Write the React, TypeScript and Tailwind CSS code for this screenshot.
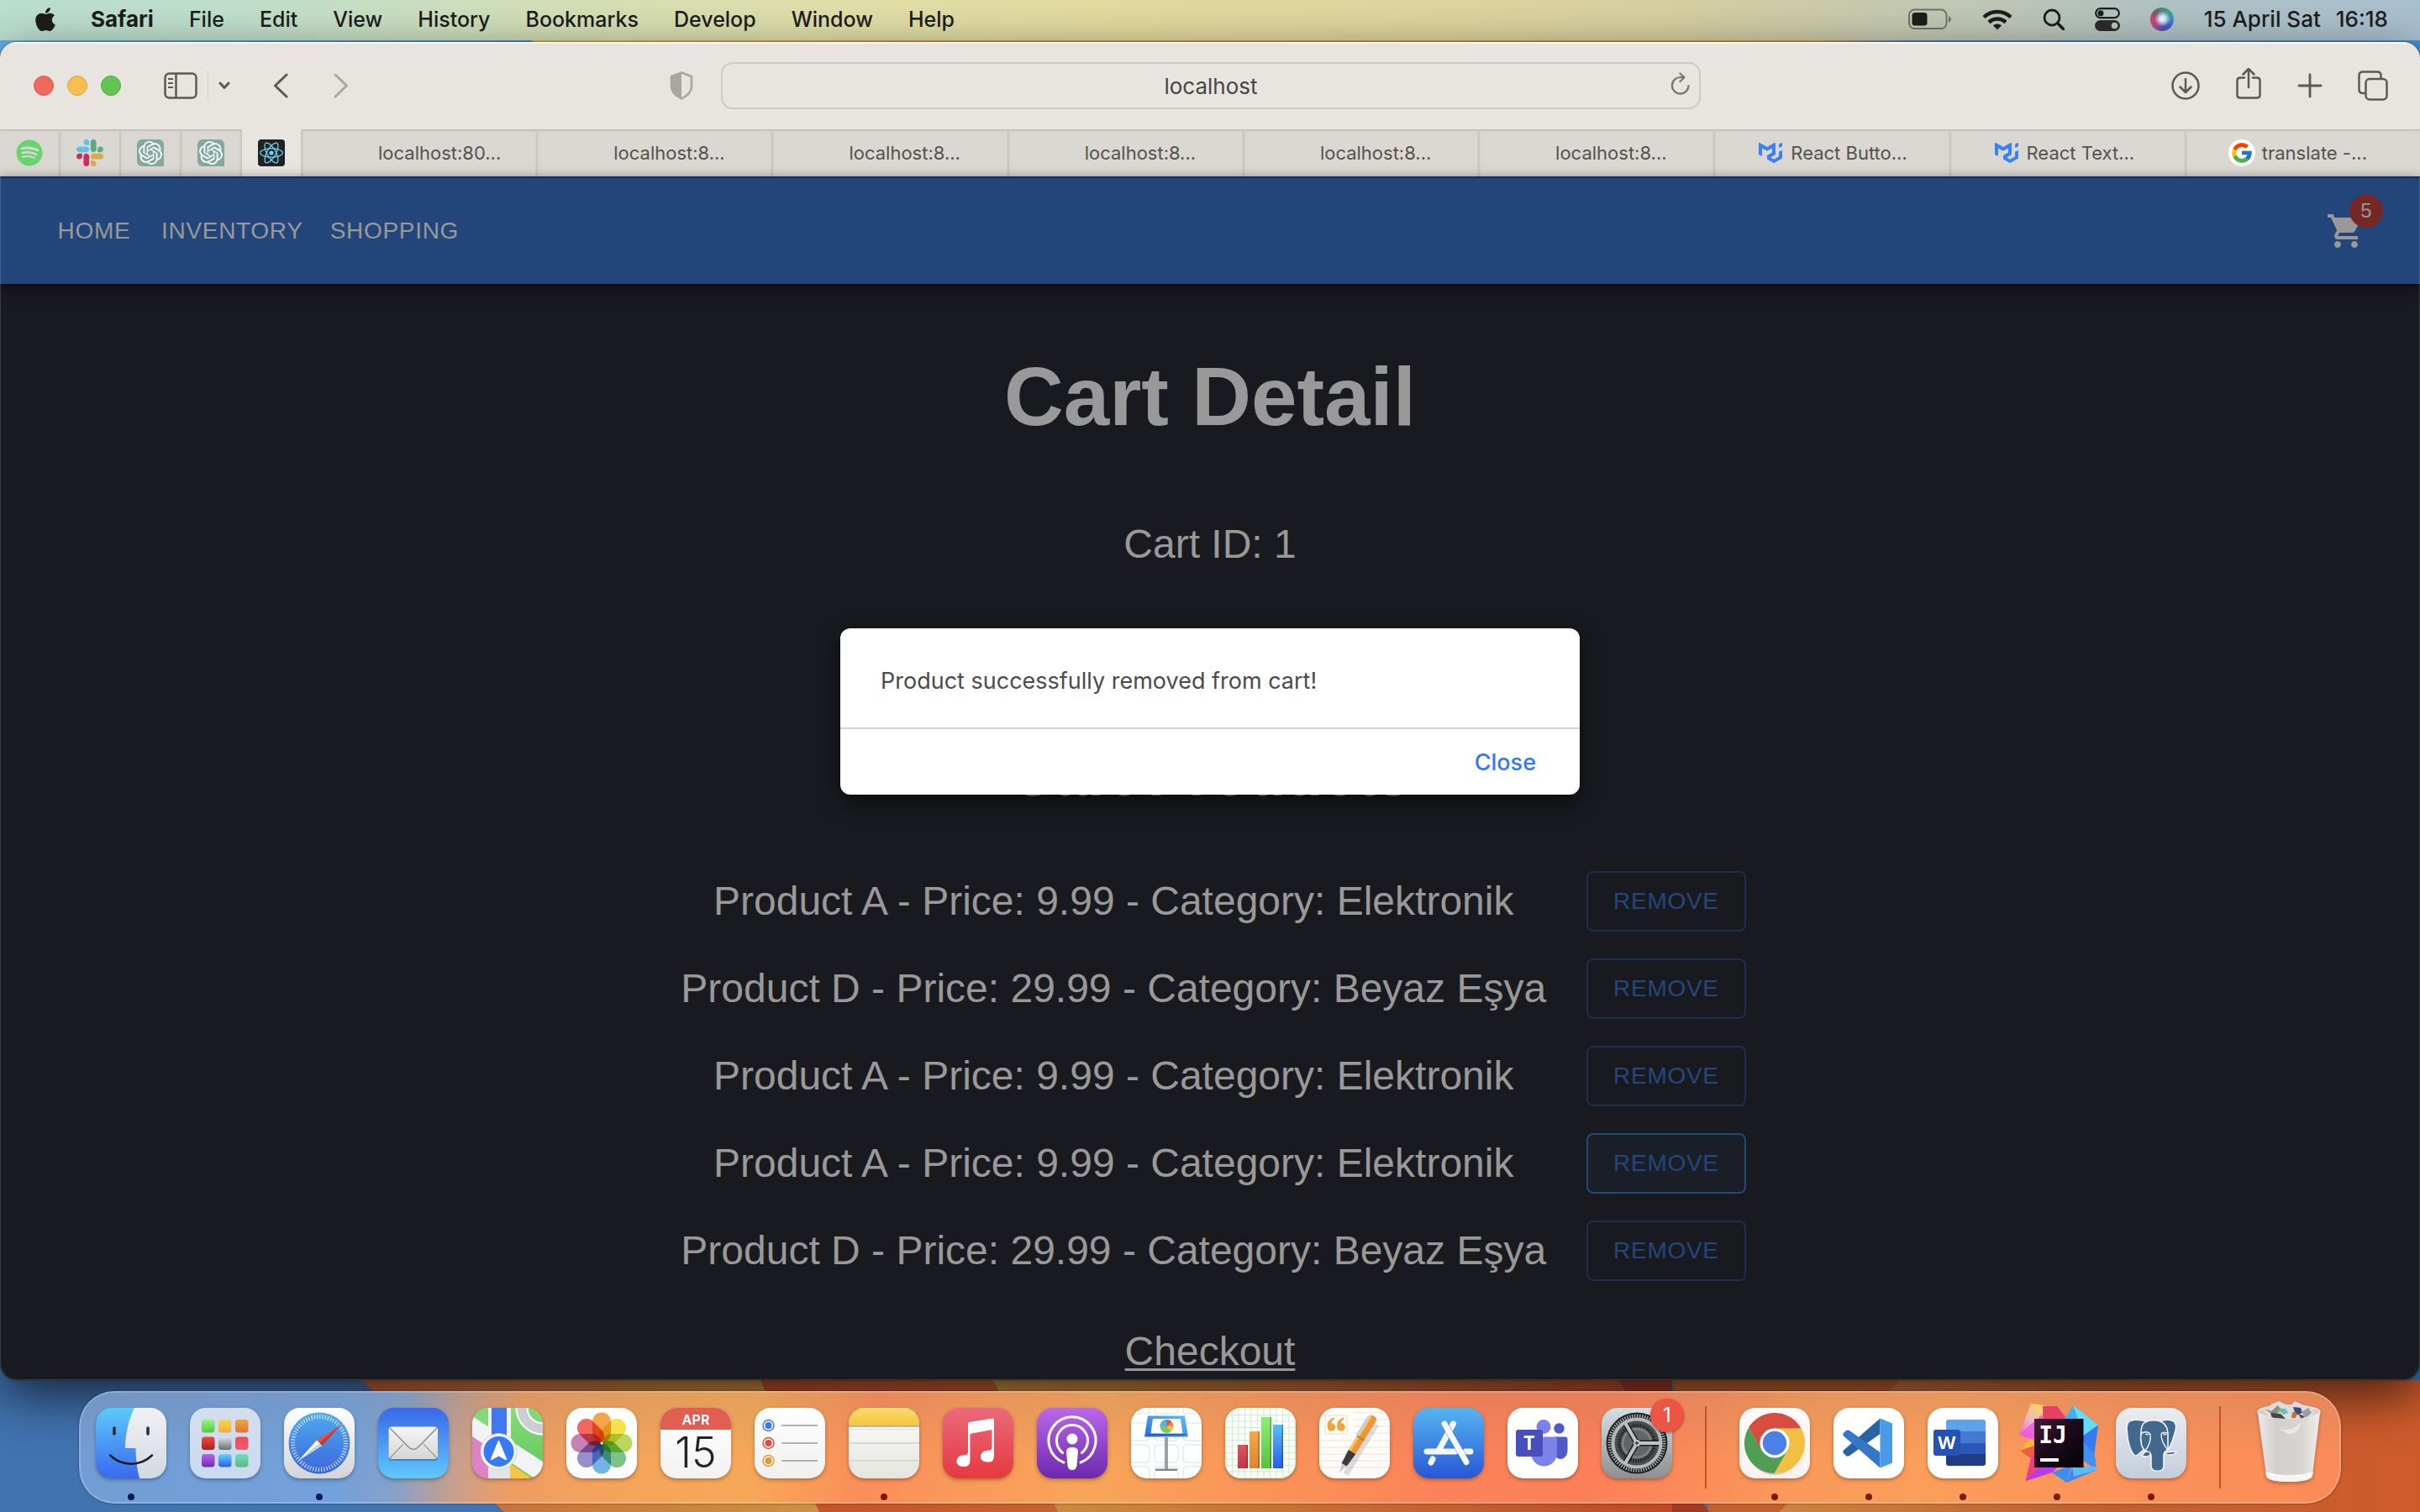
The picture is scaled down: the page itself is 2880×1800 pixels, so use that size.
import type { ReactNode } from "react";
import { FaApple, FaSpotify } from "react-icons/fa";
import { FcGoogle } from "react-icons/fc";
import { SiMui, SiOpenai, SiReact } from "react-icons/si";

/* ---------- helpers ---------- */

function Gradient({ id, from, to }: { id: string; from: string; to: string }) {
  return (
    <linearGradient id={id} x1="0" y1="0" x2="0" y2="1">
      <stop offset="0" stopColor={from} />
      <stop offset="1" stopColor={to} />
    </linearGradient>
  );
}

function Tile({ id, from, to, children }: { id: string; from: string; to: string; children?: ReactNode }) {
  return (
    <svg viewBox="0 0 84 84" className="size-[84px] overflow-visible drop-shadow-[0_2px_2px_rgba(0,0,0,0.3)]" aria-hidden="true">
      <defs>
        <Gradient id={id} from={from} to={to} />
        <clipPath id={`${id}-clip`}>
          <rect width="84" height="84" rx="19" />
        </clipPath>
      </defs>
      <g clipPath={`url(#${id}-clip)`}>
        <rect width="84" height="84" fill={`url(#${id})`} />
        {children}
      </g>
    </svg>
  );
}

/* ---------- dock icons ---------- */

function FinderIcon() {
  return (
    <Tile id="finder" from="#5ccafb" to="#3a68ee">
      <defs>
        <Gradient id="finder-face" from="#f1f1f3" to="#d3d9e2" />
      </defs>
      <path d="M46 0C40 12 35 30 35 48h12.5C47.5 60 49 73 52 84h32V0Z" fill="url(#finder-face)" />
      <path d="M22 24v7M62 24v7" stroke="#2b2b2e" strokeWidth="3.5" strokeLinecap="round" />
      <path d="M17 56.500C31 70 53 70 67 56.500" fill="none" stroke="#1d1d20" strokeWidth="2.5" strokeLinecap="round" />
    </Tile>
  );
}

const launchColors = [
  ["#95f57a", "#56c840"],
  ["#f8d651", "#efad3c"],
  ["#efa63f", "#dc7534"],
  ["#ee4b40", "#ab1f17"],
  ["#d5e2ea", "#6f6f71"],
  ["#ea4d52", "#ec5c74"],
  ["#b961ea", "#6e2fb4"],
  ["#5ed4fb", "#2f5ae8"],
  ["#75dcc8", "#58b97c"],
];

function LaunchpadIcon() {
  return (
    <Tile id="launchpad" from="#d3dfef" to="#cbdaf0">
      {launchColors.map(([from, to], i) => (
        <g key={i}>
          <defs>
            <Gradient id={`launch-${i}`} from={from} to={to} />
          </defs>
          <rect x={14 + (i % 3) * 20} y={14 + Math.floor(i / 3) * 20.5} width="15.5" height="15.5" rx="3.5" fill={`url(#launch-${i})`} />
        </g>
      ))}
    </Tile>
  );
}

function SafariIcon() {
  return (
    <Tile id="safari" from="#ffffff" to="#d4d4d6">
      <defs>
        <Gradient id="safari-dial" from="#50aaf0" to="#3a66dd" />
      </defs>
      <circle cx="42" cy="42" r="36.5" fill="url(#safari-dial)" />
      <circle cx="42" cy="42" r="31.5" fill="none" stroke="#fff" strokeOpacity=".8" strokeWidth="5" strokeDasharray="1.1 2.2" />
      <path d="M68 20 39 38.5 45 45Z" fill="#e8523f" />
      <path d="M68 20 42 42 45 45Z" fill="#bd3a2e" />
      <path d="M17 63 39 38.5 45 45Z" fill="#fff" />
      <path d="M17 63 42 42 45 45Z" fill="#c9cfd9" />
    </Tile>
  );
}

function MailIcon() {
  return (
    <Tile id="mail" from="#3a68ea" to="#60c8fa">
      <defs>
        <Gradient id="mail-env" from="#f6f6f6" to="#d6d6d6" />
      </defs>
      <rect x="12.5" y="24" width="58.5" height="39" rx="4" fill="#000" fillOpacity=".25" />
      <rect x="12.5" y="22.5" width="58.5" height="38.5" rx="4" fill="url(#mail-env)" />
      <path d="m14 60 16-17M70 60 54 43" stroke="#999" strokeWidth="1.2" />
      <path d="m14 24 22 22.500q6 6 12 0L70 24" fill="none" stroke="#8e8e8e" strokeWidth="1.5" />
    </Tile>
  );
}

function MapsIcon() {
  return (
    <Tile id="maps" from="#86dc78" to="#5fc65b">
      <path d="M0 30 30 50 19 84H0Z" fill="#de82c6" />
      <path d="M45 66 80 90H40Z" fill="#f3c73f" />
      <path d="M0 10 84 64V84H74L0 34Z" fill="#f2f3f6" />
      <path d="M0 10 18 21V0H0Z" fill="#84da76" />
      <path d="M19 58h26v26H19Z" fill="#e3e5ea" />
      <path d="M19 0h27v50H19Z" fill="#f2f3f6" />
      <path d="M23 0h18v40H23Z" fill="#3f78f0" />
      <circle cx="84" cy="0" r="25" fill="none" stroke="#fff" strokeWidth="15" />
      <circle cx="84" cy="0" r="25" fill="none" stroke="#cdcdd6" strokeWidth="11" />
      <circle cx="31.5" cy="52" r="21.5" fill="#f4f5f8" stroke="#c5c8d0" strokeWidth=".8" />
      <circle cx="31.5" cy="52" r="18" fill="#377af5" />
      <path d="M31.500 39.500 40.500 61.500l-9-5-9 5Z" fill="#fff" stroke="#fff" strokeWidth="1.5" strokeLinejoin="round" />
    </Tile>
  );
}

const petals = ["#f39c33", "#f4e03a", "#b4d54a", "#6bc07a", "#64aee4", "#8d84c9", "#c274ae", "#f1584c"];

function PhotosIcon() {
  return (
    <Tile id="photos" from="#ffffff" to="#fbfbfd">
      {petals.map((color, i) => (
        <rect key={color} x="31" y="5.5" width="22" height="36" rx="11" fill={color} fillOpacity=".9" transform={`rotate(${i * 45} 42 42)`} className="mix-blend-multiply" />
      ))}
      <circle cx="42" cy="42" r="1.5" fill="#fff" />
    </Tile>
  );
}

function CalendarIcon() {
  return (
    <Tile id="calendar" from="#ffffff" to="#f2f2f2">
      <path d="M0 0h84v26H0Z" fill="#e05f52" />
      <text x="42" y="20" textAnchor="middle" fill="#fff" fontFamily="Inter, sans-serif" fontWeight="700" fontSize="16">APR</text>
      <text x="42" y="71" textAnchor="middle" fill="#222" fontFamily="Inter, sans-serif" fontWeight="300" fontSize="50">15</text>
    </Tile>
  );
}

function RemindersIcon() {
  return (
    <Tile id="reminders" from="#ffffff" to="#f0f0ef">
      {["#3478f6", "#e34a3c", "#e8962e"].map((color, i) => (
        <g key={color}>
          <circle cx="16.5" cy={21 + i * 21} r="6.5" fill="none" stroke={color} strokeWidth="1.4" />
          <circle cx="16.5" cy={21 + i * 21} r="4" fill={color} />
          <path d={`M32 ${21 + i * 21}h43`} stroke="#b1b1b6" strokeWidth="1.8" />
        </g>
      ))}
    </Tile>
  );
}

function NotesIcon() {
  return (
    <Tile id="notes" from="#fcfcfa" to="#e6e6e0">
      <defs>
        <Gradient id="notes-top" from="#f9dc6d" to="#f4c53c" />
      </defs>
      <path d="M0 0h84v21.500H0Z" fill="url(#notes-top)" />
      <path d="M0 22h84" stroke="#a7a49a" strokeWidth="1.5" />
      <path d="M2 25.500h80" stroke="#bdbdb8" strokeWidth="1.2" strokeDasharray="1.2 1.8" />
      <path d="M0 42h84M0 63h84" stroke="#cfcfcc" strokeWidth="1.5" />
    </Tile>
  );
}

function MusicIcon() {
  return (
    <Tile id="music" from="#ea6a7c" to="#e6393f">
      <path d="M30 19q0-1.500 1.500-2L59.500 12.500q1.500-.2 1.500 1.500V56c0 9-4 8.500-8 8.500-11 0-10-12.500-1-13.500 5-.6 6.500-1 6.500-4V26L32.500 31v30.500c0 8-4 8.500-8 8.500-11 0-10-12.500-1-13.500 5-.6 6.500-1 6.500-4Z" fill="#fff" />
    </Tile>
  );
}

function PodcastsIcon() {
  return (
    <Tile id="podcasts" from="#bb68ea" to="#6c28ac">
      <g fill="none" stroke="#fff" strokeWidth="3" strokeLinecap="round">
        <path d="M32 65A28 28 0 1 1 52 65" />
        <path d="M30.500 53.500A18.500 18.500 0 1 1 53.500 53.500" />
      </g>
      <circle cx="42" cy="37" r="6.5" fill="#fff" />
      <path d="M35 52q0-5 7-5t7 5l-1.500 17q-.8 5-5.500 5t-5.500-5Z" fill="#fff" />
    </Tile>
  );
}

function KeynoteIcon() {
  return (
    <Tile id="keynote" from="#ffffff" to="#ffffff">
      <g fill="none" stroke="#cfe2f3" strokeWidth="1">
        {[-14, 18, 44, 70].map((y) => [-12, 28, 62].map((x) => <rect key={`${x}-${y}`} x={x} y={y} width={x === 28 ? 28 : 34} height="21" rx="4" />))}
      </g>
      <defs>
        <linearGradient id="keynote-screen" x1="0" y1="1" x2="1" y2="0">
          <stop offset="0" stopColor="#2c6be0" />
          <stop offset="1" stopColor="#5cc2fa" />
        </linearGradient>
      </defs>
      <path d="M40 35h4v38h-4Z" fill="#9aa1ab" />
      <path d="M29 72.500h26v2.500H29Z" fill="#85898f" />
      <path d="M20 9.500h44L68 34.500H16Z" fill="url(#keynote-screen)" />
      <path d="M20 32h45" stroke="#173f96" strokeWidth="1.2" />
      <path d="M26 13h33l2.500 17.500H23.500Z" fill="#fff" />
      <circle cx="42.5" cy="22" r="8" fill="#7cc85c" />
      <path d="M42.500 22V14a8 8 0 0 0-8 8Z" fill="#4bb4ea" />
      <path d="M42.500 22V14a8 8 0 0 1 6 2.700Z" fill="#dd4b5b" />
      <path d="m42.500 22 6-5.300a8 8 0 0 1 2 5.300Z" fill="#ea8a38" />
      <path d="M42.500 22h8a8 8 0 0 1-3 6.200Z" fill="#f1c543" />
    </Tile>
  );
}

function NumbersIcon() {
  const lines = Array.from({ length: 12 }, (_, i) => 1 + i * 7.5);
  return (
    <Tile id="numbers" from="#ffffff" to="#fafafa">
      <g stroke="#c9f0c3" strokeWidth="1">
        {lines.map((v) => <path key={v} d={`M${v} 0V84M0 ${v}H84`} />)}
      </g>
      {[
        [15, 44, "#dd5560", "#c5333f"],
        [29, 28, "#f2ab48", "#dd842f"],
        [43, 11, "#8df071", "#56c43c"],
        [57, 20, "#58c0fa", "#2a5ce8"],
      ].map(([x, y, from, to]) => (
        <g key={x}>
          <defs>
            <Gradient id={`bar-${x}`} from={String(from)} to={String(to)} />
          </defs>
          <rect x={x} y={y} width="12" height={72 - Number(y)} fill={`url(#bar-${x})`} />
          <rect x={Number(x) + 10.5} y={y} width="1.5" height={72 - Number(y)} fill="#000" fillOpacity=".3" />
        </g>
      ))}
    </Tile>
  );
}

function PagesIcon() {
  return (
    <Tile id="pages" from="#ffffff" to="#fafafa">
      <g stroke="#fbe0bd" strokeWidth="1.2">
        {[39, 47, 55, 63, 71].map((y) => <path key={y} d={`M0 ${y}H84`} />)}
        {[6, 14, 22, 30].map((y) => <path key={y} d={`M41 ${y}H84`} />)}
        <rect x="7" y="9" width="26" height="22" fill="none" />
      </g>
      <g fill="#efa53c">
        <circle cx="14.5" cy="23" r="4.8" />
        <circle cx="26" cy="23" r="4.8" />
        <path d="M9.700 23C9 17 12 13 18 11.500V13.500C15 15 14 17 14.500 19ZM21.200 23C20.500 17 23.500 13 29.500 11.500V13.500C26.500 15 25.500 17 26 19Z" />
      </g>
      <g transform="translate(24 77) rotate(31.5)">
        <path d="M4-2h7v-70H4Z" fill="#000" fillOpacity=".12" />
        <path d="M0 0-3.500-12h7Z" fill="#c3ccd6" />
        <path d="M-3.500-11h7L5-29H-5Z" fill="#3a3a3c" />
        <path d="M-5-29H5V-77q-5-4-10 0Z" fill="#e9973a" />
        <path d="M-5-29h3V-78l-3 1Z" fill="#f9c66c" />
        <path d="M-5-48H5" stroke="#b86f22" strokeWidth="1.5" />
        <path d="M-5.500-50v-24" stroke="#b9d4ea" strokeWidth="2.5" strokeLinecap="round" />
      </g>
    </Tile>
  );
}

function AppStoreIcon() {
  return (
    <Tile id="appstore" from="#56b5f0" to="#2857d6">
      <g stroke="#f4f7fb" strokeWidth="7" strokeLinecap="round">
        <path d="M47.500 19 30 51" />
        <path d="M16 52h34" />
        <path d="M23 61l-2 4" />
        <path d="M62 52h6" />
        <path d="M37 19 63 64.500" stroke="#2f6fd0" strokeOpacity=".35" strokeWidth="9" />
        <path d="M37 19 63 64.500" />
      </g>
    </Tile>
  );
}

function TeamsIcon() {
  return (
    <Tile id="teams" from="#ffffff" to="#ffffff">
      <circle cx="61.5" cy="24.5" r="6.2" fill="#5059c9" />
      <path d="M56 34.500h12.500q3 0 3 3V50c0 7-4 11-8.500 11S56 57 56 50Z" fill="#5059c9" />
      <circle cx="43" cy="22.5" r="8.5" fill="#7b83eb" />
      <path d="M28 34.500h27.500q3.500 0 3.500 3.500v15c0 10-7 16.500-15.500 16.500S28 63 28 53Z" fill="#7b83eb" />
      <rect x="10" y="26" width="32" height="32" rx="3" fill="#484ebc" />
      <text x="26" y="50" textAnchor="middle" fill="#fff" fontFamily="Open Sans, sans-serif" fontWeight="700" fontSize="23">T</text>
    </Tile>
  );
}

function SettingsIcon() {
  return (
    <Tile id="settings" from="#d3dfe6" to="#8e8f90">
      <circle cx="42" cy="42" r="36.5" fill="#1f2021" />
      <circle cx="42" cy="42" r="32.5" fill="none" stroke="#a9adb0" strokeWidth="4" strokeDasharray="1.4 1.6" />
      <circle cx="42" cy="42" r="28.5" fill="#4c4d4e" stroke="#b4b8ba" strokeWidth="4" />
      <circle cx="42" cy="42" r="21" fill="none" stroke="#1f2021" strokeWidth="4" strokeDasharray="1.5 1.5" />
      <circle cx="42" cy="42" r="17" fill="#636465" stroke="#7f8081" strokeWidth="3" />
      <g stroke="#1f2021" strokeWidth="7">
        <path d="M42 42h26M42 42 29 19.500M42 42 29 64.500" />
      </g>
      <g stroke="#bfc3c5" strokeWidth="4">
        <path d="M42 42h28M42 42 28 17.800M42 42 28 66.200" />
      </g>
      <circle cx="42" cy="42" r="4" fill="#bfc3c5" />
      <circle cx="42" cy="42" r="1.8" fill="#333" />
    </Tile>
  );
}

function ChromeIcon() {
  const wedge = "M42 24.500H73.500A36 36 0 0 0 11.100 23.500L26.850 50.750 42 42Z";
  return (
    <Tile id="chrome" from="#fffafa" to="#fdf1ee">
      <ellipse cx="42" cy="46" rx="33" ry="34" fill="#000" fillOpacity=".14" />
      <path d={wedge} fill="#f1bf42" transform="rotate(120 42 42)" />
      <path d={wedge} fill="#4f9e53" transform="rotate(240 42 42)" />
      <path d={wedge} fill="#d74e40" />
      <circle cx="42" cy="42" r="17.5" fill="#fff" />
      <circle cx="42" cy="42" r="14.2" fill="#4a80e8" />
    </Tile>
  );
}

function VsCodeIcon() {
  return (
    <Tile id="vscode" from="#ffffff" to="#ffffff">
      <path d="M55.500 12.500V31L19 57q-2 1.200-4 0L12 54q-1.500-2 0-3.500Z" fill="#2763a5" />
      <path d="M55.500 71.500V53L19 27q-2-1.200-4 0L12 30q-1.500 2 0 3.500Z" fill="#3377c6" />
      <path d="M55.500 12.500 70 18.500V65.500L55.500 71.500Z" fill="#4a9aea" />
    </Tile>
  );
}

function WordIcon() {
  return (
    <Tile id="word" from="#ffffff" to="#ffffff">
      <defs>
        <clipPath id="word-page">
          <rect x="22" y="14" width="47" height="55" rx="3" />
        </clipPath>
      </defs>
      <g clipPath="url(#word-page)">
        <path d="M22 14h47v14H22Z" fill="#5ea3e8" />
        <path d="M22 28h47v14H22Z" fill="#417bd0" />
        <path d="M22 42h47v13H22Z" fill="#2b57bb" />
        <path d="M22 55h47v14H22Z" fill="#1f3c87" />
      </g>
      <rect x="7" y="26" width="32" height="31" rx="3" fill="#2552b4" />
      <text x="23" y="49" textAnchor="middle" fill="#fff" fontFamily="Open Sans, sans-serif" fontWeight="700" fontSize="22">W</text>
    </Tile>
  );
}

function IntelliJIcon() {
  return (
    <svg viewBox="0 0 84 84" className="size-[84px] overflow-visible" aria-hidden="true">
      <defs>
        <linearGradient id="ij-fan" x1="0" y1="1" x2=".6" y2="0">
          <stop offset="0" stopColor="#e84be8" />
          <stop offset=".6" stopColor="#f0b6c8" />
          <stop offset="1" stopColor="#f6d36a" />
        </linearGradient>
        <linearGradient id="ij-box" x1="0" y1="0" x2="1" y2="1">
          <stop offset="0" stopColor="#4a1a3a" />
          <stop offset=".45" stopColor="#1c0a1c" />
          <stop offset="1" stopColor="#050304" />
        </linearGradient>
      </defs>
      <path d="M-3 32 11-5 27-3 24 14 15 40Z" fill="url(#ij-fan)" />
      <path d="M-3 32 24 8 30 30 15 38Z" fill="#e957dd" fillOpacity=".8" />
      <path d="M25-2h17L53 12 50 30H26Z" fill="#e73f66" />
      <path d="M61.500-3 91 20.500 73 40 50 14Z" fill="#43aef0" />
      <path d="M61.500-3 91 20.500 73 34Z" fill="#64dcfb" />
      <path d="M91 20.500 86.500 54 89 74 70 60 72 34Z" fill="#3478f2" />
      <path d="M73 40 86.500 54 89 74 70 60Z" fill="#3f92f4" />
      <path d="M-2 51 9 37 20 40 18 50Z" fill="#f4b23e" />
      <path d="M-2 51 18 44 20 60 11 60Z" fill="#ef5a44" />
      <path d="M11 59 20 50 36 77 4.500 87Z" fill="#ea3f84" />
      <path d="M22 70 46 68 36 77 4.500 87Z" fill="#b83bf0" />
      <path d="M36 77 60 68 53.500 89Z" fill="#3a8df5" />
      <path d="M53.500 89 62 66 89 74Z" fill="#3f86f3" />
      <path d="M60 70 89 70 89 74 62 82Z" fill="#58bdf6" />
      <rect x="15" y="13" width="58.5" height="58" fill="url(#ij-box)" />
      <text x="37" y="42" textAnchor="middle" fill="#fff" fontFamily="DejaVu Sans Mono, monospace" fontWeight="700" fontSize="28">IJ</text>
      <path d="M22 62h22" stroke="#fff" strokeWidth="4" />
    </svg>
  );
}

function PostgresIcon() {
  return (
    <Tile id="postgres" from="#eaedf1" to="#c3cddb">
      <g fill="#42688f" stroke="#f4f6f9" strokeWidth="1.6" strokeLinejoin="round" strokeLinecap="round">
        <path d="M52 16c5-2 14-3 18 1 2 3 2 6 1 10-2 8-4 15-8 22l-6-2Z" />
        <path d="M36 16c-7-2-17-3-21 1-3 4-2 9-1 18 1 8 3 14 6 19 2 3 4 4 6 2l7-6Z" />
        <path d="M30 30c0-6 1-11 5-13 5-3 15-3 20 0 5 3 7 9 7 16v16c-1 2-5 3-5 7v14c-1 7-14 7-15 0V57c0-4-4-4-7-6-5-3-6-13-5-21Z" />
        <path d="M30 31c3-3 9-3 11 0 1 8-1 14-6 20M62 30c-4-1-8-1-8 2 0 7 3 11 7 17" fill="none" strokeWidth="1.3" />
        <path d="M31 57c2-1 3-5 5-5s5 0 5 2-2 4-5 4-4 0-5-1ZM58 53c5 0 9-1 14-1-1 3-5 4-8 4s-5-1-6-3Z" strokeWidth="1.3" />
      </g>
      <path d="M36 31.500h3M57 31.500h2.500" stroke="#fff" strokeWidth="1.6" strokeLinecap="round" />
    </Tile>
  );
}

function TrashIcon() {
  return (
    <svg viewBox="0 0 84 84" className="size-[84px] overflow-visible drop-shadow-[0_2px_2px_rgba(0,0,0,0.3)]" aria-hidden="true">
      <defs>
        <linearGradient id="trash-body" x1="0" y1="0" x2="1" y2="0">
          <stop offset="0" stopColor="#ededed" />
          <stop offset=".3" stopColor="#d3d3d1" />
          <stop offset=".7" stopColor="#d8d8d6" />
          <stop offset="1" stopColor="#f2f2f2" />
        </linearGradient>
      </defs>
      <ellipse cx="42" cy="5" rx="37" ry="8" fill="#d8cfcb" stroke="#eee" strokeWidth="1.5" />
      <path d="M11 3 22-5 30-8 38-4 42 0 49-8 60-3 68-1 72 6 66 13H20Z" fill="#dcdcda" />
      <path d="m13 1 8 3 8-7 4 6-9 6Z" fill="#8a8c8d" />
      <path d="m20 6 12 1 6 6-16-1Z" fill="#4a4743" />
      <path d="m30 1 8 0 3 5-6 2Z" fill="#58c4dc" />
      <path d="m26 4 7-4 1 5Z" fill="#7fbf4a" />
      <path d="m47-1 9 1 2 6-8 3Z" fill="#3e4b77" />
      <path d="m46 5 6 1-2 6-5 0Z" fill="#c96a35" />
      <path d="m57 5 8-5 4 6-7 6Z" fill="#9a9c9e" />
      <path d="m53 7 8 3-4 4Z" fill="#5a5148" />
      <path d="M5 6q37 15 74 0L70 80q-1 8-28 8T15 80Z" fill="url(#trash-body)" fillOpacity=".97" />
      <path d="M14 76q28 8 57 0l-1 5q-2 7-28 7t-27-7Z" fill="#fafafa" fillOpacity=".9" />
      <path d="M31 25q14 4 26-8-3 14-16 14Z" fill="#f2f2f2" fillOpacity=".7" />
    </svg>
  );
}

/* ---------- menu bar ---------- */

const menus = ["File", "Edit", "View", "History", "Bookmarks", "Develop", "Window", "Help"];

function MenuBar() {
  return (
    <header className="flex h-12 shrink-0 items-center justify-between bg-[linear-gradient(90deg,#bbded1_0%,#c0dfcc_10%,#d2dfb8_22%,#dfdfab_33%,#e3da9f_46%,#dfd49e_60%,#d6cfa0_69%,#c2c8b3_80%,#b0c2c4_90%,#a8bfd0_100%)] px-[38px] pb-0.5 text-[25px] leading-8 text-[#1c1e1b]">
      <nav aria-label="Menu bar" className="flex items-center gap-[42px]">
        <button type="button" aria-label="Apple menu" className="-mr-1"><FaApple className="size-8" /></button>
        <button type="button" className="text-[26px] font-bold">Safari</button>
        {menus.map((menu) => (
          <button type="button" key={menu} className="font-medium">{menu}</button>
        ))}
      </nav>
      <div className="flex items-center gap-9">
        <svg viewBox="0 0 52 26" className="h-[26px] w-[52px]" aria-label="Battery">
          <rect x="1" y="1.5" width="44.5" height="22.5" rx="6.5" fill="none" stroke="#1c1e1b" strokeOpacity=".5" strokeWidth="2" />
          <rect x="4.5" y="5" width="18" height="15.5" rx="3.5" fill="#1c1e1b" />
          <path d="M48 9q3 1.500 3 4t-3 4Z" fill="#1c1e1b" fillOpacity=".5" />
        </svg>
        <svg viewBox="0 0 36 26" className="h-[26px] w-9" aria-label="Wi-Fi" fill="none" stroke="#1c1e1b" strokeWidth="4.5">
          <path d="M2 10.500a23 23 0 0 1 32 0" />
          <path d="M8 16.500a14.500 14.500 0 0 1 20 0" />
          <path d="m18 25.500-5-5.200a7.500 7.500 0 0 1 10 0Z" fill="#1c1e1b" stroke="none" />
        </svg>
        <svg viewBox="0 0 26 26" className="size-[26px]" aria-label="Search" fill="none" stroke="#1c1e1b" strokeWidth="2.8" strokeLinecap="round">
          <circle cx="11" cy="11" r="9" />
          <path d="m17.500 17.500 7 7" strokeWidth="3.5" />
        </svg>
        <svg viewBox="0 0 30 28" className="h-7 w-[30px]" aria-label="Control Centre">
          <rect x="1.2" y="1.2" width="27.6" height="11" rx="5.5" fill="none" stroke="#1c1e1b" strokeWidth="2.2" />
          <circle cx="7" cy="6.7" r="3.5" fill="#1c1e1b" />
          <rect y="15" width="30" height="13" rx="6.5" fill="#2b2d2a" />
          <circle cx="23.5" cy="21.5" r="3.8" fill="#bfc6b6" />
        </svg>
        <span role="img" aria-label="Siri" className="size-7 rounded-full bg-[radial-gradient(circle_at_52%_48%,#fff_0%,#cfe3f7_18%,transparent_45%),conic-gradient(#4c8f7d,#3f9f93,#3f8fd0,#3860c8,#5a4fb0,#b04a90,#d84468,#7a5a6a,#4c8f7d)]" />
        <time className="flex gap-[18px] text-[26px] font-medium">
          <span>15 April Sat</span>
          <span>16:18</span>
        </time>
      </div>
    </header>
  );
}

/* ---------- Safari toolbar and tabs ---------- */

function Toolbar() {
  return (
    <div className="flex h-[104px] shrink-0 items-center bg-[#e8e5e0] text-[#5c5953] shadow-[inset_0_2px_0_#f8f6f3]">
      <div className="flex flex-1 items-center pl-10">
        <div className="flex gap-4">
          <button type="button" aria-label="Close window" className="size-6 rounded-full border border-[#d8594c] bg-[#ed6a5e]" />
          <button type="button" aria-label="Minimise window" className="size-6 rounded-full border border-[#dba63d] bg-[#f5bf4f]" />
          <button type="button" aria-label="Zoom window" className="size-6 rounded-full border border-[#51a73e] bg-[#61c554]" />
        </div>
        <button type="button" aria-label="Show sidebar" className="ml-[51px]">
          <svg viewBox="0 0 40 32" className="h-8 w-10" fill="none" stroke="currentColor" strokeWidth="2.5">
            <rect x="1.5" y="1.5" width="37" height="29" rx="5" />
            <path d="M14.500 1.500v29" />
            <path d="M5 8h6M5 13h6M5 18h6" strokeWidth="2" />
          </svg>
        </button>
        <span className="ml-3 h-9 w-px bg-[#d3d0cb]" />
        <button type="button" aria-label="Tab groups" className="ml-3">
          <svg viewBox="0 0 14 10" className="h-2.5 w-3.5" fill="none" stroke="currentColor" strokeWidth="3" strokeLinecap="round" strokeLinejoin="round">
            <path d="m2 2 5 5.500L12 2" />
          </svg>
        </button>
        <button type="button" aria-label="Back" className="ml-[51px]">
          <svg viewBox="0 0 18 30" className="h-[30px] w-[18px]" fill="none" stroke="currentColor" strokeWidth="3" strokeLinecap="round" strokeLinejoin="round">
            <path d="M16 2 2.500 15 16 28" />
          </svg>
        </button>
        <button type="button" aria-label="Forward" className="ml-[54px] text-[#aaa7a1]">
          <svg viewBox="0 0 18 30" className="h-[30px] w-[18px]" fill="none" stroke="currentColor" strokeWidth="3" strokeLinecap="round" strokeLinejoin="round">
            <path d="M2 2 15.500 15 2 28" />
          </svg>
        </button>
        <button type="button" aria-label="Privacy report" className="mr-[33px] ml-auto text-[#a9a6a0]">
          <svg viewBox="0 0 28 34" className="h-[34px] w-7">
            <path d="M14 1.500 26 6v12c0 7-5 11-12 14.500C7 29 2 25 2 18V6Z" fill="none" stroke="currentColor" strokeWidth="2.5" strokeLinejoin="round" />
            <path d="M14 1.500V32.500C7 29 2 25 2 18V6Z" fill="currentColor" />
          </svg>
        </button>
      </div>
      <div className="relative w-[40.5%]">
        <input aria-label="Address" defaultValue="localhost" className="h-14 w-full rounded-[14px] border-2 border-[#cdcac6] bg-[#e8e5e0] text-center text-[26px] text-[#464542]" />
        <button type="button" aria-label="Reload" className="absolute top-3 right-3 text-[#77746f]">
          <svg viewBox="0 0 24 28" className="h-7 w-6" fill="none" stroke="currentColor" strokeWidth="2.2" strokeLinecap="round" strokeLinejoin="round">
            <path d="M21.500 16A9.800 9.800 0 1 1 12 6h4" />
            <path d="m11.500 1.500 5 4.500-5 5" />
          </svg>
        </button>
      </div>
      <div className="flex flex-1 items-center justify-end gap-[42px] pr-[38px]">
        <button type="button" aria-label="Downloads">
          <svg viewBox="0 0 34 34" className="size-[34px]" fill="none" stroke="currentColor" strokeWidth="2.5" strokeLinecap="round" strokeLinejoin="round">
            <circle cx="17" cy="17" r="15.5" />
            <path d="M17 9v16M10.500 18.500 17 25l6.500-6.500" />
          </svg>
        </button>
        <button type="button" aria-label="Share">
          <svg viewBox="0 0 32 38" className="mb-1.5 h-[38px] w-8" fill="none" stroke="currentColor" strokeWidth="2.5" strokeLinecap="round" strokeLinejoin="round">
            <path d="M11 12.500H6q-3.500 0-3.500 3.500v17q0 3.500 3.500 3.500h20q3.500 0 3.500-3.500V16q0-3.500-3.500-3.500h-5M16 24V2M9.500 8.500 16 2l6.500 6.500" />
          </svg>
        </button>
        <button type="button" aria-label="New tab">
          <svg viewBox="0 0 30 30" className="size-[30px]" stroke="currentColor" strokeWidth="2.8" strokeLinecap="round">
            <path d="M15 2v26M2 15h26" />
          </svg>
        </button>
        <button type="button" aria-label="Tab overview">
          <svg viewBox="0 0 36 36" className="size-9" fill="none" stroke="currentColor" strokeWidth="2.5" strokeLinejoin="round">
            <rect x="9.5" y="10" width="25" height="24.5" rx="4.5" />
            <path d="M9.500 27H6q-4.500 0-4.500-4.500V6Q1.500 1.500 6 1.500h17q4.500 0 4.500 4.500v4" />
          </svg>
        </button>
      </div>
    </div>
  );
}

function SlackMark() {
  return (
    <svg viewBox="0 0 122.8 122.8" className="size-8" aria-hidden="true">
      <path fill="#c8305b" d="M25.800 77.600c0 7.100-5.800 12.900-12.900 12.900S0 84.700 0 77.600s5.800-12.900 12.900-12.900h12.900v12.900zM32.300 77.600c0-7.100 5.800-12.900 12.900-12.900s12.900 5.800 12.900 12.900v32.300c0 7.100-5.800 12.900-12.900 12.900s-12.900-5.800-12.900-12.900V77.600z" />
      <path fill="#66bfe0" d="M45.200 25.800c-7.100 0-12.900-5.800-12.900-12.900S38.100 0 45.200 0s12.900 5.800 12.900 12.900v12.900H45.200zM45.200 32.300c7.100 0 12.900 5.800 12.900 12.900s-5.800 12.900-12.900 12.900H12.900C5.800 58.100 0 52.300 0 45.200s5.800-12.900 12.900-12.900h32.300z" />
      <path fill="#57ab7c" d="M97 45.200c0-7.100 5.800-12.900 12.900-12.900s12.900 5.800 12.900 12.900-5.800 12.900-12.900 12.900H97V45.200zM90.500 45.200c0 7.100-5.800 12.900-12.900 12.900s-12.900-5.800-12.900-12.900V12.900C64.700 5.800 70.500 0 77.600 0s12.900 5.800 12.900 12.900v32.300z" />
      <path fill="#dcaa49" d="M77.600 97c7.100 0 12.900 5.800 12.900 12.900s-5.800 12.900-12.900 12.900-12.900-5.800-12.900-12.900V97h12.900zM77.600 90.500c-7.100 0-12.900-5.800-12.900-12.900s5.800-12.900 12.900-12.900h32.300c7.100 0 12.900 5.800 12.900 12.900s-5.800 12.900-12.900 12.900H77.600z" />
    </svg>
  );
}

function GptMark() {
  return (
    <span className="flex size-8 items-center justify-center rounded-l-[6px] rounded-tr-[6px] bg-[#81a99d] text-white">
      <SiOpenai className="size-7" />
    </span>
  );
}

const pinned: { name: string; icon: ReactNode; active?: boolean }[] = [
  { name: "Spotify", icon: <FaSpotify className="size-8 text-[#67d46e]" /> },
  { name: "Slack", icon: <SlackMark /> },
  { name: "ChatGPT", icon: <GptMark /> },
  { name: "ChatGPT 2", icon: <GptMark /> },
  {
    name: "React App",
    active: true,
    icon: (
      <span className="flex size-8 items-center justify-center rounded-[4px] bg-[#222] text-[#6fd3f3]">
        <SiReact className="size-7" />
      </span>
    ),
  },
];

const muiMark = <SiMui className="size-7 text-[#3a80f6]" />;

const tabs: { title: string; icon?: ReactNode }[] = [
  { title: "localhost:80..." },
  { title: "localhost:8..." },
  { title: "localhost:8..." },
  { title: "localhost:8..." },
  { title: "localhost:8..." },
  { title: "localhost:8..." },
  { title: "React Butto...", icon: muiMark },
  { title: "React Text...", icon: muiMark },
  { title: "translate -...", icon: <span className="flex size-8 items-center justify-center rounded-full bg-white"><FcGoogle className="size-7" /></span> },
];

function TabBar() {
  return (
    <div role="tablist" className="flex h-14 shrink-0 text-[22px] leading-7 text-[#55524d]">
      {pinned.map((tab) => (
        <button
          type="button"
          role="tab"
          key={tab.name}
          aria-label={tab.name}
          aria-selected={Boolean(tab.active)}
          className={tab.active ? "flex w-[72px] items-center justify-center border-r-2 border-[#cbc8c3] bg-[#e8e5e0]" : "flex w-[72px] items-center justify-center border-r-2 border-[#cbc8c3] bg-[#dbd8d3] shadow-[inset_0_2px_2px_#c2bfba]"}
        >
          {tab.icon}
        </button>
      ))}
      {tabs.map((tab, i) => (
        <button type="button" role="tab" aria-selected={false} key={i} className="flex min-w-0 flex-1 items-center gap-2 border-r-2 border-[#cbc8c3] bg-[#dbd8d3] pl-[50px] whitespace-nowrap shadow-[inset_0_2px_2px_#c2bfba] last:border-r-0">
          <span className="flex size-8 shrink-0 items-center justify-center">{tab.icon}</span>
          {tab.title}
        </button>
      ))}
    </div>
  );
}

/* ---------- shop page ---------- */

const navLinks = ["HOME", "INVENTORY", "SHOPPING"];

const productA = "Product A - Price: 9.99 - Category: Elektronik";
const productD = "Product D - Price: 29.99 - Category: Beyaz Eşya";
const rows = [
  { text: productA },
  { text: productD },
  { text: productA },
  { text: productA, hovered: true },
  { text: productD },
];

function ShopNav() {
  return (
    <header className="relative flex h-32 shrink-0 items-center justify-between border-t-2 border-[#0f2c64] bg-[#22467a] pr-16 pl-12 text-[#999] shadow-[0_4px_14px_rgba(0,0,0,0.6)]">
      <nav aria-label="Shop" className="flex text-[28px] leading-8 tracking-wide">
        {navLinks.map((link) => (
          <a key={link} href={`#${link.toLowerCase()}`} className="min-w-32 px-4 text-center">{link}</a>
        ))}
      </nav>
      <a href="#cart" aria-label="Cart, 5 items" className="relative">
        <svg viewBox="0 0 24 24" className="size-12" fill="currentColor" aria-hidden="true">
          <path d="M7 18c-1.100 0-1.990.9-1.990 2S5.900 22 7 22s2-.9 2-2-.9-2-2-2zM1 2v2h2l3.600 7.590-1.350 2.450c-.16.280-.25.610-.25.960 0 1.100.9 2 2 2h12v-2H7.420c-.14 0-.25-.11-.25-.25l.03-.12.9-1.630h7.450c.75 0 1.410-.41 1.750-1.030l3.580-6.490c.08-.14.120-.31.120-.48 0-.55-.45-1-1-1H5.210l-.94-2H1zm16 16c-1.100 0-1.990.9-1.990 2s.89 2 1.990 2 2-.9 2-2-.9-2-2-2z" />
        </svg>
        <span className="absolute -top-5 -right-5 flex size-10 items-center justify-center rounded-full bg-[#752724] text-2xl">5</span>
      </a>
    </header>
  );
}

function CartPage() {
  return (
    <main className="flex flex-1 flex-col items-center overflow-hidden bg-[#191a1f] pt-[78px] text-[48px] leading-[56px] text-[#999]">
      <h1 className="text-[98px] leading-[112px] font-bold">Cart Detail</h1>
      <p className="mt-[92px]">Cart ID: 1</p>
      <h2 className="mt-[206px] text-[72px] leading-[80px] font-bold">Cart Products</h2>
      <ul className="mt-[75px] grid grid-cols-[auto_auto] items-center justify-center gap-x-10 gap-y-8">
        {rows.map((row, i) => (
          <li key={i} className="contents">
            <span className="px-2 text-center">{row.text}</span>
            <button
              type="button"
              className={row.hovered ? "h-[72px] rounded-lg border-2 border-[#23487e] bg-[#1a1e27] px-[30px] text-[28px] leading-8 tracking-wide text-[#23477c]" : "h-[72px] rounded-lg border-2 border-[#1c2f50] px-[30px] text-[28px] leading-8 tracking-wide text-[#23477c]"}
            >
              REMOVE
            </button>
          </li>
        ))}
      </ul>
      <a href="#checkout" className="mt-14 underline decoration-[3px] underline-offset-4">Checkout</a>
    </main>
  );
}

function AlertDialog() {
  return (
    <div role="alertdialog" aria-describedby="alert-message" className="absolute inset-x-0 top-[698px] mx-auto w-[880px] rounded-xl bg-white font-[Inter,sans-serif] text-[27px] leading-8 shadow-[0_8px_24px_rgba(0,0,0,0.55)]">
      <p id="alert-message" className="border-b-2 border-[#d3d3d3] px-12 pt-[47px] pb-[39px] text-[#4b4b4b]">Product successfully removed from cart!</p>
      <div className="flex justify-end px-[52px] pt-6 pb-[22px]">
        <button type="button" className="font-medium text-[#3478f6]">Close</button>
      </div>
    </div>
  );
}

function BrowserWindow() {
  return (
    <section aria-label="Safari" className="relative mt-0.5 flex min-h-0 flex-1 flex-col overflow-hidden rounded-[20px] shadow-[0_20px_60px_rgba(0,0,0,0.65),0_0_2px_rgba(0,0,0,0.6)]">
      <Toolbar />
      <TabBar />
      <div className="flex min-h-0 flex-1 flex-col font-['Liberation_Sans',Arial,sans-serif]">
        <ShopNav />
        <CartPage />
      </div>
      <AlertDialog />
      <div className="pointer-events-none absolute inset-0 rounded-[20px] border border-white/15" />
    </section>
  );
}

/* ---------- dock ---------- */

type DockApp = { name: string; icon: ReactNode; dot?: string; badge?: string };

const systemApps: DockApp[] = [
  { name: "Finder", icon: <FinderIcon />, dot: "bg-[#02195a]" },
  { name: "Launchpad", icon: <LaunchpadIcon /> },
  { name: "Safari", icon: <SafariIcon />, dot: "bg-[#02195a]" },
  { name: "Mail", icon: <MailIcon /> },
  { name: "Maps", icon: <MapsIcon /> },
  { name: "Photos", icon: <PhotosIcon /> },
  { name: "Calendar", icon: <CalendarIcon /> },
  { name: "Reminders", icon: <RemindersIcon /> },
  { name: "Notes", icon: <NotesIcon />, dot: "bg-[#7a1500]" },
  { name: "Music", icon: <MusicIcon /> },
  { name: "Podcasts", icon: <PodcastsIcon /> },
  { name: "Keynote", icon: <KeynoteIcon /> },
  { name: "Numbers", icon: <NumbersIcon /> },
  { name: "Pages", icon: <PagesIcon /> },
  { name: "App Store", icon: <AppStoreIcon /> },
  { name: "Teams", icon: <TeamsIcon /> },
  { name: "System Settings", icon: <SettingsIcon />, badge: "1" },
];

const openApps: DockApp[] = [
  { name: "Chrome", icon: <ChromeIcon />, dot: "bg-[#7a1500]" },
  { name: "Visual Studio Code", icon: <VsCodeIcon />, dot: "bg-[#7a1c00]" },
  { name: "Word", icon: <WordIcon />, dot: "bg-[#7a1c00]" },
  { name: "IntelliJ IDEA", icon: <IntelliJIcon />, dot: "bg-[#7a1c00]" },
  { name: "Postgres", icon: <PostgresIcon />, dot: "bg-[#7a1500]" },
];

function DockItem({ app }: { app: DockApp }) {
  return (
    <button type="button" aria-label={app.name} className="relative flex flex-col items-center pt-5">
      {app.icon}
      {app.dot && <span className={`mt-[18px] size-2 rounded-full ${app.dot}`} />}
      {app.badge && (
        <span className="absolute top-[9px] -right-3.5 flex size-10 items-center justify-center rounded-full bg-[#ec5445] text-[24px] text-white shadow-[0_1px_3px_rgba(0,0,0,0.4)]">{app.badge}</span>
      )}
    </button>
  );
}

function DockDivider() {
  return <span className="mt-[18px] flex h-[98px] w-6 justify-center"><span className="w-0.5 bg-[#c4541f]" /></span>;
}

function Dock() {
  return (
    <nav aria-label="Dock" className="relative mx-auto mt-[13px] mb-2.5 flex h-[134px] shrink-0 items-start gap-7 rounded-[42px] bg-[linear-gradient(180deg,rgba(120,110,100,0.16),transparent_60%),linear-gradient(98deg,#729dd4_0%,#73a1db_12%,#86a0c8_14.5%,#c79f8e_17%,#ee9d62_19.5%,#f5a45b_25%,#f6a857_30%,#fb8d5a_35%,#f99b59_40%,#f7a45a_45%,#fa9558_52%,#fb8359_60%,#fb8058_67%,#fa8a5a_71%,#f99a5a_76%,#fb9e5a_82%,#fb925a_90%,#fa8b58_100%)] px-5 shadow-[inset_0_0_0_2px_rgba(255,255,255,0.22),0_0_3px_rgba(0,0,0,0.45)]">
      {systemApps.map((app) => <DockItem key={app.name} app={app} />)}
      <DockDivider />
      {openApps.map((app) => <DockItem key={app.name} app={app} />)}
      <DockDivider />
      <DockItem app={{ name: "Trash", icon: <TrashIcon /> }} />
    </nav>
  );
}

function Wallpaper() {
  return (
    <svg viewBox="0 0 2880 1800" preserveAspectRatio="none" className="absolute inset-0 size-full" aria-hidden="true">
      <defs>
        <linearGradient id="sky" x1="0" x2="1">
          <stop offset="0" stopColor="#6aaee0" />
          <stop offset=".219" stopColor="#4f93cc" />
          <stop offset=".221" stopColor="#e0bf4e" />
          <stop offset=".4" stopColor="#dd9c3c" />
          <stop offset=".75" stopColor="#d99a40" />
          <stop offset=".79" stopColor="#4f86c0" />
          <stop offset="1" stopColor="#4a8fd0" />
        </linearGradient>
        <linearGradient id="ground-a" x1="0" x2="1"><stop offset="0" stopColor="#c9653a" /><stop offset="1" stopColor="#cb9340" /></linearGradient>
        <linearGradient id="ground-b" x1="0" x2="1"><stop offset="0" stopColor="#c5502c" /><stop offset="1" stopColor="#c8622e" /></linearGradient>
        <linearGradient id="ground-c" x1="0" x2="1"><stop offset="0" stopColor="#cc9140" /><stop offset="1" stopColor="#be4527" /></linearGradient>
        <linearGradient id="ground-d" x1="0" x2="1"><stop offset="0" stopColor="#cc8440" /><stop offset=".5" stopColor="#c0602e" /><stop offset="1" stopColor="#cf5b2c" /></linearGradient>
      </defs>
      <rect width="2880" height="900" fill="url(#sky)" />
      <rect y="900" width="2880" height="900" fill="#4173b0" />
      <path d="M430 1643H905L975 1800H600Z" fill="url(#ground-a)" />
      <path d="M905 1643h277l77 157H975Z" fill="url(#ground-b)" />
      <path d="M1182 1643h744l108 157H1259Z" fill="url(#ground-c)" />
      <path d="M1926 1643h64l0 157h44Z" fill="#a33a26" />
      <path d="M1990 1643h270l-140 157h-86Z" fill="#c2602c" />
      <path d="M2260 1643h620v157H2118Z" fill="url(#ground-d)" />
    </svg>
  );
}

export default function App() {
  return (
    <div className="relative isolate flex h-screen flex-col overflow-hidden font-[Inter,sans-serif]">
      <Wallpaper />
      <div className="relative flex min-h-0 flex-1 flex-col">
        <MenuBar />
        <BrowserWindow />
        <Dock />
      </div>
    </div>
  );
}
